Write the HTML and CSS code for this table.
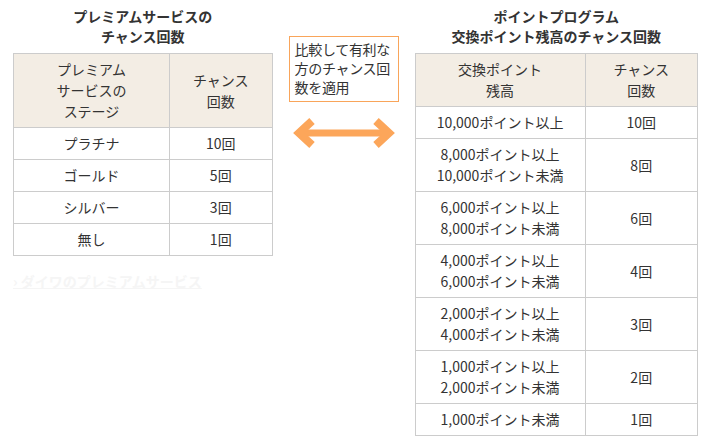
FILE: index.html
```html
<!DOCTYPE html>
<html lang="ja">
<head>
<meta charset="utf-8">
<link rel="stylesheet" href="styles.css">
</head>
<body>
<div class="wrap">
  <div class="col left">
    <div class="title">プレミアムサービスの<br>チャンス回数</div>
    <table class="tbl">
      <colgroup><col class="c1l"><col></colgroup>
      <tr><th>プレミアム<br>サービスの<br>ステージ</th><th>チャンス<br>回数</th></tr>
      <tr><td>プラチナ</td><td>10回</td></tr>
      <tr><td>ゴールド</td><td>5回</td></tr>
      <tr><td>シルバー</td><td>3回</td></tr>
      <tr><td>無し</td><td>1回</td></tr>
    </table>
    <a class="faint">› ダイワのプレミアムサービス</a>
  </div>
  <div class="col mid">
    <div class="note">比較して有利な<br>方のチャンス回<br>数を適用</div>
    <svg class="arrow" width="102" height="30" viewBox="0 0 102 30">
      <line x1="6" y1="15" x2="96" y2="15" stroke="#fca65a" stroke-width="7"/>
      <polyline points="19,3 6,15 19,27" fill="none" stroke="#fca65a" stroke-width="8" stroke-linejoin="miter" stroke-miterlimit="10"/>
      <polyline points="83,3 96,15 83,27" fill="none" stroke="#fca65a" stroke-width="8" stroke-linejoin="miter" stroke-miterlimit="10"/>
    </svg>
  </div>
  <div class="col right">
    <div class="title">ポイントプログラム<br>交換ポイント残高のチャンス回数</div>
    <table class="tbl">
      <colgroup><col class="c1r"><col></colgroup>
      <tr><th>交換ポイント<br>残高</th><th>チャンス<br>回数</th></tr>
      <tr><td>10,000ポイント以上</td><td>10回</td></tr>
      <tr><td>8,000ポイント以上<br>10,000ポイント未満</td><td>8回</td></tr>
      <tr><td>6,000ポイント以上<br>8,000ポイント未満</td><td>6回</td></tr>
      <tr><td>4,000ポイント以上<br>6,000ポイント未満</td><td>4回</td></tr>
      <tr><td>2,000ポイント以上<br>4,000ポイント未満</td><td>3回</td></tr>
      <tr><td>1,000ポイント以上<br>2,000ポイント未満</td><td>2回</td></tr>
      <tr><td>1,000ポイント未満</td><td>1回</td></tr>
    </table>
  </div>
</div>
</body>
</html>
```
FILE: styles.css
```css
html, body {
  background: #ffffff;
}
body {
  margin: 0;
  padding: 6px 10px 0 13px;
  font-family: "Noto Sans CJK JP", "Noto Sans", sans-serif;
  font-size: 14px;
  color: #333333;
}
.wrap {
  display: flex;
  gap: 16px;
  align-items: flex-start;
}
.left { width: 260px; }
.right { width: 284px; }
.mid {
  width: 110px;
  margin-top: 30px;
  display: flex;
  flex-direction: column;
  align-items: flex-start;
}
.title {
  font-weight: bold;
  text-align: center;
  line-height: 20px;
  margin-bottom: 7px;
}
.tbl {
  width: 100%;
  border-collapse: collapse;
}
.c1l { width: 156px; }
.c1r { width: 170px; }
.tbl th, .tbl td {
  border: 1px solid #cccccc;
  padding: 5px 4px;
  text-align: center;
  line-height: 21px;
  font-weight: normal;
}
.tbl th {
  background: #f3ede4;
}
.faint {
  display: block;
  margin-top: 15px;
  line-height: 20px;
  color: #f5f5f5;
  font-weight: bold;
  text-decoration: underline;
}
.note {
  box-sizing: border-box;
  width: 110px;
  height: 66px;
  border: 1px solid #f9a55a;
  padding: 3px 5px;
  line-height: 19px;
  letter-spacing: -0.3px;
}
.arrow {
  display: block;
  margin-top: 16px;
  margin-left: 4px;
}
```
